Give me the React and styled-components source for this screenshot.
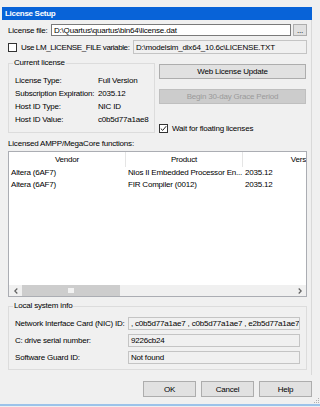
import React from "react";
import styled, { createGlobalStyle } from "styled-components";

const GlobalStyle = createGlobalStyle`
  html, body {
    margin: 0;
    padding: 0;
    background: #f0f0f0;
  }
  body {
    font-family: "Liberation Sans", Arial, sans-serif;
    font-size: 8px;
    letter-spacing: -0.2px;
    color: #000;
  }
  * {
    box-sizing: border-box;
  }
`;

const Window = styled.div`
  width: 320px;
  height: 407px;
  overflow: hidden;
  display: flex;
  flex-direction: column;
  padding: 7px 0 0 2px;
  background: #f0f0f0;
`;

const TitleBar = styled.div`
  width: 310px;
  height: 13px;
  background: #0863d8;
  color: #fff;
  font-weight: bold;
  font-size: 8px;
  letter-spacing: -0.3px;
  line-height: 13px;
  padding-left: 3px;
`;

const Panel = styled.div`
  width: 310px;
  height: 355px;
  border-right: 1px solid #d9d9d9;
  padding: 4px 4px 0 6px;
  display: flex;
  flex-direction: column;
`;

const Row = styled.div`
  display: flex;
  align-items: center;
  height: ${(p) => p.h || 12}px;
  margin-top: ${(p) => p.mt || 0}px;
`;

const Label = styled.span`
  width: ${(p) => (p.w ? `${p.w}px` : "auto")};
  flex: 0 0 auto;
  white-space: nowrap;
  letter-spacing: ${(p) => (p.tight ? "-0.4px" : "inherit")};
`;

const TextBox = styled.div`
  flex: 1;
  height: 100%;
  border: 1px solid ${(p) => (p.readOnly ? "#c4c4c4" : "#7a7a7a")};
  background: ${(p) => (p.readOnly ? "#f0f0f0" : "#fff")};
  padding-left: 2px;
  display: flex;
  align-items: center;
  white-space: nowrap;
  overflow: hidden;
`;

const Button = styled.button`
  font: inherit;
  letter-spacing: inherit;
  color: ${(p) => (p.disabled ? "#9a9a9a" : "#000")};
  background: ${(p) => (p.disabled ? "#cccccc" : "#e1e1e1")};
  border: 1px solid ${(p) => (p.disabled ? "#bfbfbf" : "#adadad")};
  border-radius: 0;
  padding: 0;
  width: ${(p) => (p.w ? `${p.w}px` : "100%")};
  height: ${(p) => p.h || 15}px;
  margin-top: ${(p) => p.mt || 0}px;
  margin-left: ${(p) => p.ml || 0}px;
  flex: 0 0 auto;
`;

const Box = styled.span`
  width: 9px;
  height: 9px;
  border: 1px solid #333;
  background: #fff;
  flex: 0 0 auto;
  display: flex;
  align-items: center;
  justify-content: center;
  margin-right: 4px;
`;

const CheckRow = styled.div`
  display: flex;
  align-items: center;
  height: 10px;
  margin-top: ${(p) => p.mt || 0}px;
  white-space: nowrap;
`;

const Section = styled.div`
  display: flex;
  margin-top: 4px;
`;

const Group = styled.fieldset`
  margin: 0;
  margin-top: ${(p) => p.mt || 0}px;
  width: ${(p) => (p.w ? `${p.w}px` : "auto")};
  border: 1px solid #dcdcdc;
  border-radius: 0;
  padding: 6px ${(p) => p.pr || 6}px ${(p) => p.pb || 4}px 6px;
  min-width: 0;

  legend {
    padding: 0 1px;
    margin-left: -2px;
    height: 10px;
    line-height: 10px;
  }
`;

const InfoRow = styled.div`
  display: flex;
  align-items: center;
  height: 13px;
  white-space: nowrap;
`;

const Side = styled.div`
  display: flex;
  flex-direction: column;
  margin-left: 4px;
  padding-top: 6px;
  width: 147px;
`;

const Caption = styled.div`
  margin-top: 6px;
  height: 10px;
  line-height: 10px;
`;

const ListView = styled.div`
  margin-top: 2px;
  height: 146px;
  border: 1px solid #abadb3;
  background: #fff;
  display: flex;
  flex-direction: column;
  overflow: hidden;
`;

const Grid = styled.div`
  display: grid;
  grid-template-columns: 117px 117px 122px;
  height: ${(p) => p.h}px;
`;

const HeadCell = styled.div`
  text-align: center;
  line-height: 15px;
  border-right: 1px solid #e5e5e5;
  white-space: nowrap;
  overflow: hidden;
`;

const Cell = styled.div`
  padding-left: 2px;
  line-height: 12px;
  white-space: nowrap;
  overflow: hidden;
`;

const ListBody = styled.div`
  flex: 1;
`;

const ScrollBar = styled.div`
  height: 11px;
  display: flex;
  background: #f0f0f0;
`;

const Arrow = styled.div`
  width: 13px;
  display: flex;
  align-items: center;
  justify-content: center;
`;

const Track = styled.div`
  flex: 1;
  display: flex;
`;

const Thumb = styled.div`
  width: 98px;
  background: #cdcdcd;
  display: flex;
  align-items: center;
  justify-content: center;
`;

const ThumbGrip = styled.span`
  width: 6px;
  height: 5px;
  background: #f2f2f2;
`;

const Footer = styled.div`
  display: flex;
  margin-top: 6px;
  height: 23px;
  justify-content: flex-end;
  gap: 5px;
`;

const Grip = styled.svg`
  align-self: flex-end;
  margin-left: -4px;
`;

const BottomLine = styled.div`
  margin-left: -2px;
  height: 2px;
  background: #9cc3ea;
`;

const Check = () => (
  <svg width="7" height="7" viewBox="0 0 7 7">
    <path d="M0.8 3.6 L2.7 5.4 L6.2 1.2" fill="none" stroke="#222" strokeWidth="1" />
  </svg>
);

const Chevron = ({ dir }) => (
  <svg width="4" height="6" viewBox="0 0 4 6">
    <path
      d={dir === "left" ? "M3.3 0.5 L0.8 3 L3.3 5.5" : "M0.7 0.5 L3.2 3 L0.7 5.5"}
      fill="none"
      stroke="#606060"
      strokeWidth="1.2"
    />
  </svg>
);

const columns = ["Vendor", "Product", "Version"];

const functions = [
  ["Altera (6AF7)", "Nios II Embedded Processor En...", "2035.12"],
  ["Altera (6AF7)", "FIR Compiler (0012)", "2035.12"],
];

const license = [
  ["License Type:", "Full Version"],
  ["Subscription Expiration:", "2035.12"],
  ["Host ID Type:", "NIC ID"],
  ["Host ID Value:", "c0b5d77a1ae8"],
];

const systemInfo = [
  ["Network Interface Card (NIC) ID:", ", c0b5d77a1ae7 , c0b5d77a1ae7 , e2b5d77a1ae7"],
  ["C: drive serial number:", "9226cb24"],
  ["Software Guard ID:", "Not found"],
];

const App = () => {
  return (
    <>
      <GlobalStyle />
      <Window>
        <TitleBar>License Setup</TitleBar>
        <Panel>
          <Row h={12}>
            <Label w={43}>License file:</Label>
            <TextBox>D:\Quartus\quartus\bin64\license.dat</TextBox>
            <Button w={14} h={12} ml={2}>
              ...
            </Button>
          </Row>
          <Row h={14} mt={4}>
            <Box />
            <Label w={112} tight>
              Use LM_LICENSE_FILE variable:
            </Label>
            <TextBox readOnly>D:\modelsim_dlx64_10.6c\LICENSE.TXT</TextBox>
          </Row>

          <Section>
            <Group w={147}>
              <legend>Current license</legend>
              {license.map(([k, v]) => (
                <InfoRow key={k}>
                  <Label w={83}>{k}</Label>
                  <span>{v}</span>
                </InfoRow>
              ))}
            </Group>
            <Side>
              <Button h={15}>Web License Update</Button>
              <Button h={15} mt={10} disabled>
                Begin 30-day Grace Period
              </Button>
              <CheckRow mt={19}>
                <Box>
                  <Check />
                </Box>
                Wait for floating licenses
              </CheckRow>
            </Side>
          </Section>

          <Caption>Licensed AMPP/MegaCore functions:</Caption>
          <ListView>
            <Grid h={15}>
              {columns.map((c) => (
                <HeadCell key={c}>{c}</HeadCell>
              ))}
            </Grid>
            <ListBody>
              {functions.map((row, i) => (
                <Grid h={12} key={i}>
                  {row.map((c, j) => (
                    <Cell key={j}>{c}</Cell>
                  ))}
                </Grid>
              ))}
            </ListBody>
            <ScrollBar>
              <Arrow>
                <Chevron dir="left" />
              </Arrow>
              <Track>
                <Thumb>
                  <ThumbGrip />
                </Thumb>
              </Track>
              <Arrow>
                <Chevron dir="right" />
              </Arrow>
            </ScrollBar>
          </ListView>

          <Group mt={4} pr={6} pb={5}>
            <legend>Local system info</legend>
            {systemInfo.map(([k, v], i) => (
              <Row h={13} mt={i ? 4 : 0} key={k}>
                <Label w={113}>{k}</Label>
                <TextBox readOnly>{v}</TextBox>
              </Row>
            ))}
          </Group>
        </Panel>

        <Footer>
          <Button w={53} h={16}>
            OK
          </Button>
          <Button w={53} h={16}>
            Cancel
          </Button>
          <Button w={53} h={16}>
            Help
          </Button>
          <Grip width="7" height="7" viewBox="0 0 7 7">
            <rect x="5" y="1" width="1" height="1" fill="#b0b0b0" />
            <rect x="3" y="3" width="1" height="1" fill="#b0b0b0" />
            <rect x="5" y="3" width="1" height="1" fill="#b0b0b0" />
            <rect x="1" y="5" width="1" height="1" fill="#b0b0b0" />
            <rect x="3" y="5" width="1" height="1" fill="#b0b0b0" />
            <rect x="5" y="5" width="1" height="1" fill="#b0b0b0" />
          </Grip>
        </Footer>
        <BottomLine />
      </Window>
    </>
  );
};

export default App;
